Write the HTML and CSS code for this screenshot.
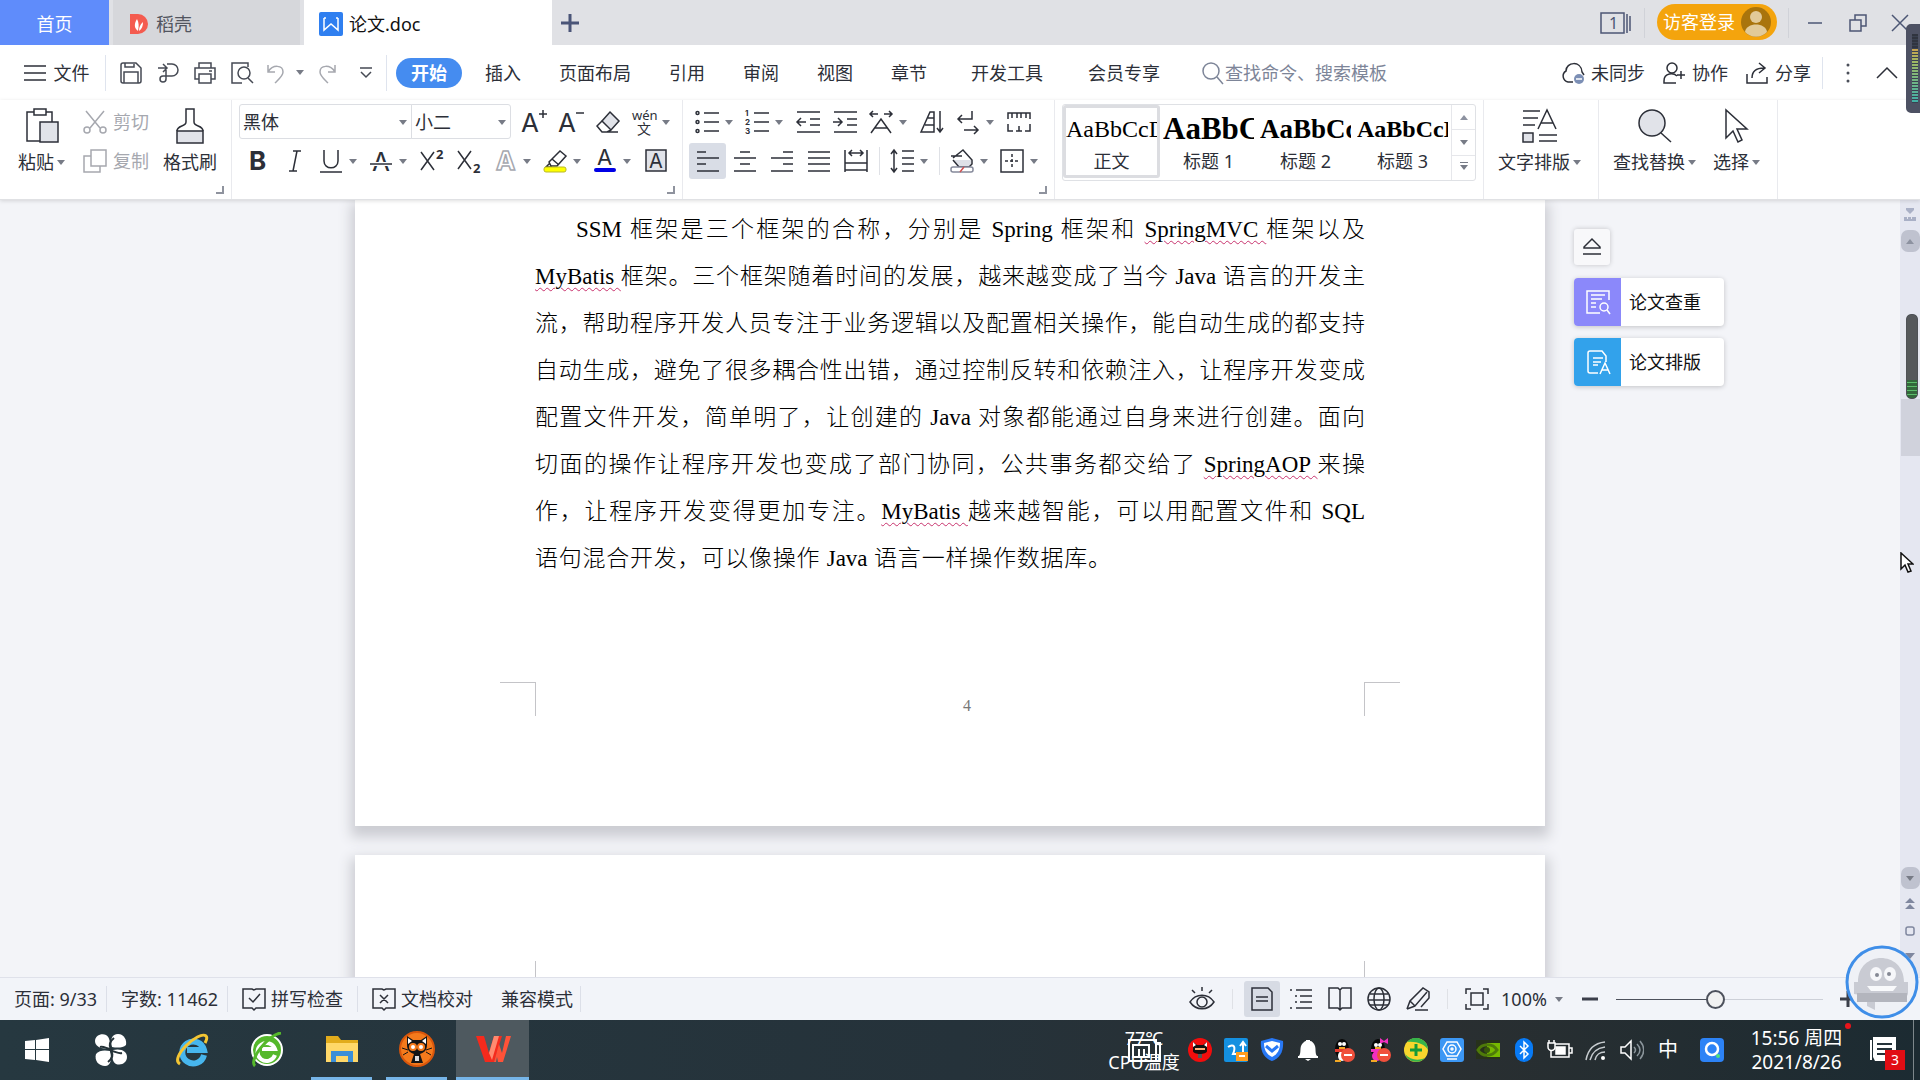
FILE: index.html
```html
<!DOCTYPE html>
<html lang="zh-CN">
<head>
  <meta charset="UTF-8" />
  <title>论文.doc</title>
  <link rel="stylesheet" href="styles.css">
</head>
<body>
  <header class="tabbar">
    <button class="tab home">首页</button>
    <button class="tab shell">
      <svg width="18" height="22" viewBox="0 0 18 22"><path d="M0 1h8a10 10 0 0 1 0 20H0z" fill="#f45b4f"/><path d="M8 18C4 15 4 11 7 6c2 4 2 7 1 12zm1 0c0-4 1-6 4-9 0 4-1 7-4 9z" fill="#fff"/></svg>
      稻壳
    </button>
    <button class="tab doc">
      <svg width="24" height="24" viewBox="0 0 24 24"><rect width="24" height="24" rx="2" fill="#2f7ff0"/><path d="M5 6v12l7-6 7 6V6M5 6h2M17 6h2" fill="none" stroke="#fff" stroke-width="1.500"/></svg>
      论文.doc
    </button>
    <button class="add" aria-label="新建"><svg width="18" height="18" viewBox="0 0 18 18"><path d="M9 0v18M0 9h18" stroke="#4a5578" stroke-width="3"/></svg></button>
    <div class="window">
      <button class="pages" aria-label="窗口"><svg class="ico" width="32" height="24" viewBox="0 0 32 24"><rect x="1" y="2" width="23" height="20"/><path d="M27 3v19M30 5v15"/><text x="9" y="18" class="t16">1</text></svg></button>
      <button class="login">访客登录
        <svg width="30" height="30" viewBox="0 0 30 30"><circle cx="15" cy="15" r="15" fill="#a9740c"/><circle cx="15" cy="10" r="6" fill="#e2ca98"/><path d="M4 25c1-10 21-10 22 0a15 15 0 0 1-22 0z" fill="#e2ca98"/></svg>
      </button>
      <button class="win" aria-label="最小化"><svg class="ico" width="16" height="18" viewBox="0 0 16 18"><path d="M1 9h14"/></svg></button>
      <button class="win" aria-label="还原"><svg class="ico" width="18" height="18" viewBox="0 0 18 18"><path d="M1 6h11v11H1zM6 6V1h11v11h-5"/></svg></button>
      <button class="win" aria-label="关闭"><svg class="ico" width="18" height="18" viewBox="0 0 18 18"><path d="M1 1l16 16M17 1L1 17"/></svg></button>
    </div>
  </header>

  <nav class="menubar">
    <button class="file"><svg class="ico" width="22" height="16" viewBox="0 0 22 16"><path d="M0 1h22M0 8h22M0 15h22"/></svg>文件</button>
    <div class="quick">
      <button aria-label="保存"><svg class="ico" width="24" height="24" viewBox="0 0 24 24"><path d="M4 2h13l5 5v13a2 2 0 0 1-2 2H4a2 2 0 0 1-2-2V4a2 2 0 0 1 2-2zM6 2v4h9V3M5 22V11h14v11"/></svg></button>
      <button aria-label="输出"><svg class="ico" width="24" height="24" viewBox="0 0 24 24"><path d="M2 7h8M7 3l4 4-4 4M11 3h5a6 6 0 0 1 0 12h-6v3a3 3 0 1 1-3-3h3V9"/></svg></button>
      <button aria-label="打印"><svg class="ico" width="24" height="24" viewBox="0 0 24 24"><path d="M6 7V2h12v5M6 18H2V7h20v11h-4M6 13h12v9H6zM16 10h3"/></svg></button>
      <button aria-label="打印预览"><svg class="ico" width="24" height="24" viewBox="0 0 24 24"><path d="M12 22H2V2h16v4M18 17l5 5"/><circle cx="14" cy="12" r="6"/></svg></button>
      <button class="off drop" aria-label="撤销"><svg class="ico" width="24" height="24" viewBox="0 0 24 24"><path d="M4 4v7h7M4 11c5-8 15-7 15 0 0 4-5 8-8 11"/></svg><i class="caret"></i></button>
      <button class="off" aria-label="恢复"><svg class="ico" width="24" height="24" viewBox="0 0 24 24"><path d="M20 4v7h-7M20 11C15 3 5 4 5 11c0 4 5 8 8 11"/></svg></button>
      <button aria-label="更多"><svg class="ico" width="14" height="14" viewBox="0 0 14 14"><path d="M1 2h12M2 6l5 5 5-5"/></svg></button>
    </div>
    <div class="menus">
      <button class="on">开始</button>
      <button>插入</button>
      <button class="wide">页面布局</button>
      <button>引用</button>
      <button>审阅</button>
      <button>视图</button>
      <button>章节</button>
      <button class="wide">开发工具</button>
      <button class="wide">会员专享</button>
    </div>
    <label class="search"><svg class="ico" width="24" height="24" viewBox="0 0 24 24"><circle cx="10" cy="10" r="8"/><path d="M16 16l6 7"/></svg><input type="text" placeholder="查找命令、搜索模板"></label>
    <div class="share">
      <button><svg class="ico" width="24" height="24" viewBox="0 0 24 24"><path d="M12 21H7a6 6 0 0 1-2-11c0-9 15-11 16 1l2 3"/><circle cx="18" cy="18" r="5" fill="#7c8fb5" stroke="none"/><path d="M15 18h6" stroke="#fff"/></svg>未同步</button>
      <button><svg class="ico" width="24" height="24" viewBox="0 0 24 24"><circle cx="10" cy="7" r="5"/><path d="M14 22H2v-2c0-9 10-8 13-5M15 14h8M19 10v8"/></svg>协作</button>
      <button><svg class="ico" width="24" height="24" viewBox="0 0 24 24"><path d="M2 13v9h20v-6M7 17c0-7 4-10 12-10M14 2l6 5-6 5"/></svg>分享</button>
      <button class="more" aria-label="更多"><svg width="4" height="22" viewBox="0 0 4 22" fill="#4a4e59"><circle cx="2" cy="3" r="1.500"/><circle cx="2" cy="11" r="1.500"/><circle cx="2" cy="19" r="1.500"/></svg></button>
      <button aria-label="收起"><svg class="ico" width="22" height="12" viewBox="0 0 22 12"><path d="M1 11L11 1l10 10"/></svg></button>
    </div>
  </nav>

  <section class="ribbon">
    <div class="group clip">
      <button class="big"><svg class="ico" width="36" height="36" viewBox="0 0 36 36"><path d="M10 4H3v29h13M22 4h6v10M10 1h12v6H10z"/><rect x="16" y="14" width="18" height="20" fill="#e1e3e9"/></svg><span>粘贴<i class="caret"></i></span></button>
      <div class="pair">
        <button class="off"><svg class="ico" width="24" height="24" viewBox="0 0 24 24"><path d="M3 1l14 17M21 1L7 18"/><circle cx="4" cy="20" r="3"/><circle cx="20" cy="20" r="3"/></svg>剪切</button>
        <button class="off"><svg class="ico" width="24" height="24" viewBox="0 0 24 24"><path d="M8 1h15v16H8zM8 7H1v16h16v-6"/></svg>复制</button>
      </div>
      <button class="big"><svg class="ico" width="36" height="36" viewBox="0 0 36 36"><path d="M5 23h26v12H5z" fill="#e1e3e9"/><path d="M5 23c0-6 9-4 9-9V1h8v13c0 5 9 3 9 9"/></svg><span>格式刷</span></button>
      <i class="corner"></i>
    </div>

    <div class="group font">
      <div class="row">
        <label class="combo name"><select aria-label="字体"><option>黑体</option></select><i class="caret"></i></label>
        <label class="combo size"><select aria-label="字号"><option>小二</option></select><i class="caret"></i></label>
        <button class="tool" aria-label="增大字号"><svg class="ico" width="26" height="26" viewBox="0 0 26 26"><text x="0" y="23" class="t26">A</text><path d="M18 5h8M22 1v8"/></svg></button>
        <button class="tool" aria-label="减小字号"><svg class="ico" width="26" height="26" viewBox="0 0 26 26"><text x="0" y="23" class="t26">A</text><path d="M18 4h8"/></svg></button>
        <button class="tool" aria-label="清除格式"><svg class="ico" width="24" height="24" viewBox="0 0 24 24"><path d="M14 2l9 9-8 9-9-9z" fill="#e1e3e9"/><path d="M6 11l-5 5 5 6h5l4-2M8 22h14"/></svg></button>
        <button class="tool drop" aria-label="拼音"><svg class="ico" width="24" height="26" viewBox="0 0 24 26"><text x="0" y="11" class="t13">wén</text><text x="5" y="25" class="t14">文</text></svg><i class="caret"></i></button>
      </div>
      <div class="row">
        <button class="tool" aria-label="加粗"><svg class="ico" width="24" height="24" viewBox="0 0 24 24"><text x="3" y="21" class="t26 bold">B</text></svg></button>
        <button class="tool" aria-label="倾斜"><svg class="ico" width="24" height="24" viewBox="0 0 24 24"><path d="M10 2h8M6 22h8M14 2l-4 20"/></svg></button>
        <button class="tool drop" aria-label="下划线"><svg class="ico" width="24" height="24" viewBox="0 0 24 24"><path d="M5 1v11c0 9 14 9 14 0V1M1 23h22"/></svg><i class="caret"></i></button>
        <button class="tool drop" aria-label="删除线"><svg class="ico" width="24" height="24" viewBox="0 0 24 24"><text x="3" y="22" class="t26">A</text><path d="M1 15h22" stroke="#fff" stroke-width="4"/><path d="M1 15h22"/></svg><i class="caret"></i></button>
        <button class="tool" aria-label="上标"><svg class="ico" width="26" height="24" viewBox="0 0 26 24"><path d="M2 3l13 18M15 3L2 21"/><text x="17" y="10" class="t13 bold">2</text></svg></button>
        <button class="tool" aria-label="下标"><svg class="ico" width="26" height="24" viewBox="0 0 26 24"><path d="M2 2l13 18M15 2L2 20"/><text x="17" y="24" class="t13 bold">2</text></svg></button>
        <button class="tool drop" aria-label="文字效果"><svg class="ico" width="24" height="24" viewBox="0 0 24 24"><text x="3" y="21" class="t26 hollow">A</text></svg><i class="caret"></i></button>
        <button class="tool drop" aria-label="突出显示"><svg class="ico" width="24" height="24" viewBox="0 0 24 24"><path d="M6 13L17 2l6 5-9 10H8zM9 10l7 6M7 14l-4 4h6"/><rect x="1" y="18" width="22" height="5" rx="2" fill="#ff0" stroke="#b9b928" stroke-width="1"/></svg><i class="caret"></i></button>
        <button class="tool drop" aria-label="字体颜色"><svg class="ico" width="24" height="24" viewBox="0 0 24 24"><text x="4" y="16" class="t22">A</text><rect x="1" y="19" width="22" height="4" rx="2" fill="#0000e6" stroke="none"/></svg><i class="caret"></i></button>
        <button class="tool" aria-label="字符底纹"><svg class="ico" width="24" height="24" viewBox="0 0 24 24"><rect x="2" y="1" width="20" height="21" fill="#e1e3e9"/><text x="5" y="19" class="t20">A</text></svg></button>
      </div>
      <i class="corner"></i>
    </div>

    <div class="group para">
      <div class="row">
        <button class="tool drop" aria-label="项目符号"><svg class="ico" width="24" height="24" viewBox="0 0 24 24"><path d="M9 3h15M9 12h15M9 21h15"/><circle cx="2.500" cy="3" r="1.500"/><circle cx="2.500" cy="12" r="1.500"/><circle cx="2.500" cy="21" r="1.500"/></svg><i class="caret"></i></button>
        <button class="tool drop" aria-label="编号"><svg class="ico" width="24" height="24" viewBox="0 0 24 24"><path d="M9 3h15M9 12h15M9 21h15"/><text x="0" y="6" class="t8">1</text><text x="0" y="15" class="t8">2</text><text x="0" y="24" class="t8">3</text></svg><i class="caret"></i></button>
        <button class="tool" aria-label="减少缩进"><svg class="ico" width="24" height="24" viewBox="0 0 24 24"><path d="M1 2h23M14 9h10M14 15h10M1 22h23M1 12h9M5 8l-4 4 4 4"/></svg></button>
        <button class="tool" aria-label="增加缩进"><svg class="ico" width="24" height="24" viewBox="0 0 24 24"><path d="M1 2h23M14 9h10M14 15h10M1 22h23M0 12h9M5 8l4 4-4 4"/></svg></button>
        <button class="tool drop" aria-label="中文版式"><svg class="ico" width="24" height="24" viewBox="0 0 24 24"><path d="M1 4h8M4 1L1 4l3 3M15 4h8M20 1l3 3-3 3M2 23L12 9l10 14M6 18h12"/></svg><i class="caret"></i></button>
        <button class="tool" aria-label="排序"><svg class="ico" width="24" height="24" viewBox="0 0 24 24"><path d="M1 22L10 2h4v20zM5 15h9M8 8h6"/><path d="M20 1v21M17 18l3 4 3-4"/></svg></button>
        <button class="tool drop" aria-label="显示段落标记"><svg class="ico" width="24" height="24" viewBox="0 0 24 24"><path d="M16 1v8H2M6 5L2 9l4 4M8 20h14M18 16l4 4-4 4"/></svg><i class="caret"></i></button>
        <button class="tool" aria-label="制表位"><svg class="ico" width="24" height="24" viewBox="0 0 24 24"><path d="M1 9V3h22v6M5 3v5M10 3v5M14 3v5M19 3v5M1 14v7h5M23 14v7h-5M9 21h6M12 16v5"/></svg></button>
      </div>
      <div class="row">
        <button class="tool on" aria-label="左对齐"><svg class="ico" width="24" height="24" viewBox="0 0 24 24"><path d="M1 3h9M1 9h22M1 15h9M1 22h22"/></svg></button>
        <button class="tool" aria-label="居中"><svg class="ico" width="24" height="24" viewBox="0 0 24 24"><path d="M7 3h10M1 9h22M7 15h10M1 22h22"/></svg></button>
        <button class="tool" aria-label="右对齐"><svg class="ico" width="24" height="24" viewBox="0 0 24 24"><path d="M13 3h10M1 9h22M13 15h10M1 22h22"/></svg></button>
        <button class="tool" aria-label="两端对齐"><svg class="ico" width="24" height="24" viewBox="0 0 24 24"><path d="M1 3h22M1 9h22M1 15h22M1 22h22"/></svg></button>
        <button class="tool" aria-label="分散对齐"><svg class="ico" width="24" height="24" viewBox="0 0 24 24"><path d="M1 1v22M23 1v22M5 4h14M8 1L5 4l3 3M16 1l3 3-3 3M1 14h22M1 21h22"/></svg></button>
        <i class="sep"></i>
        <button class="tool drop" aria-label="行距"><svg class="ico" width="24" height="24" viewBox="0 0 24 24"><path d="M12 2h12M12 9h12M12 15h12M12 22h12M4 1v22M1 5l3-4 3 4M1 19l3 4 3-4"/></svg><i class="caret"></i></button>
        <i class="sep"></i>
        <button class="tool drop" aria-label="底纹颜色"><svg class="ico" width="24" height="24" viewBox="0 0 24 24"><path d="M4 11h17v4l-3 3H8z" fill="#dfe1e7" stroke="none"/><path d="M3 9l10-8 9 10v4l-3 3H9L3 11M1 7h11"/><rect x="1" y="18" width="22" height="5" rx="2" fill="#fff" stroke="#85899a"/><path d="M10 23l4-5" stroke="#d05050"/></svg><i class="caret"></i></button>
        <button class="tool drop" aria-label="边框"><svg class="ico" width="24" height="24" viewBox="0 0 24 24"><rect x="1" y="1" width="22" height="22"/><path d="M12 5v14M5 12h14" stroke-dasharray="3 2"/></svg><i class="caret"></i></button>
      </div>
      <i class="corner"></i>
    </div>

    <div class="group styles">
      <div class="gallery">
        <button class="style picked"><span class="sample s0">AaBbCcDd</span>正文</button>
        <button class="style"><span class="sample s1">AaBbCc</span>标题 1</button>
        <button class="style"><span class="sample s2">AaBbCc</span>标题 2</button>
        <button class="style"><span class="sample s3">AaBbCcD</span>标题 3</button>
        <div class="scroller">
          <button aria-label="上"><i class="caret up"></i></button>
          <button aria-label="下"><i class="caret"></i></button>
          <button class="all" aria-label="全部"><i class="caret"></i></button>
        </div>
      </div>
    </div>

    <div class="group one">
      <button class="big"><svg class="ico" width="36" height="36" viewBox="0 0 36 36"><path d="M1 3h17M1 10h15M1 17h12M17 27h18M17 33h18M16 21L25 2l9 19M19 15h12"/><rect x="1" y="25" width="10" height="9" fill="#e1e3e9"/></svg><span>文字排版<i class="caret"></i></span></button>
    </div>
    <div class="group two">
      <button class="big"><svg class="ico" width="36" height="36" viewBox="0 0 36 36"><circle cx="15" cy="15" r="13" fill="#e1e3e9"/><path d="M24 25l10 9"/></svg><span>查找替换<i class="caret"></i></span></button>
      <button class="big"><svg class="ico" width="36" height="36" viewBox="0 0 36 36"><path d="M7 2v28l7-7 5 11 4-2-5-11h10z" fill="#fff"/></svg><span>选择<i class="caret"></i></span></button>
    </div>
  </section>

  <main class="workspace">
    <div class="sheets">
      <article class="sheet">
        <p class="text">
          <span class="line first">SSM 框架是三个框架的合称，分别是 Spring 框架和 <u>SpringMVC </u>框架以及</span>
          <span class="line"><u>MyBatis </u>框架。三个框架随着时间的发展，越来越变成了当今 Java 语言的开发主</span>
          <span class="line">流，帮助程序开发人员专注于业务逻辑以及配置相关操作，能自动生成的都支持</span>
          <span class="line">自动生成，避免了很多耦合性出错，通过控制反转和依赖注入，让程序开发变成</span>
          <span class="line">配置文件开发，简单明了，让创建的 Java 对象都能通过自身来进行创建。面向</span>
          <span class="line">切面的操作让程序开发也变成了部门协同，公共事务都交给了 <u>SpringAOP </u>来操</span>
          <span class="line">作，让程序开发变得更加专注。<u>MyBatis </u>越来越智能，可以用配置文件和 SQL</span>
          <span class="line last">语句混合开发，可以像操作 Java 语言一样操作数据库。</span>
        </p>
        <footer class="foot"><i class="mark left"></i><span>4</span><i class="mark right"></i></footer>
      </article>
      <article class="sheet next"><i class="mark left"></i><i class="mark right"></i></article>
    </div>
    <aside class="panel">
      <button class="eject" aria-label="收起"><svg class="ico" width="20" height="20" viewBox="0 0 20 20"><path d="M10 2L2 10v1h16v-1zM1 17h18"/></svg></button>
      <button class="card check"><b><svg class="ico" width="26" height="26" viewBox="0 0 26 26"><path d="M24 11V2H2v22h13M6 6h14M6 10h11M6 14h5M6 18h5"/><circle cx="19" cy="18" r="4"/><path d="M22 21l3 4"/></svg></b>论文查重</button>
      <button class="card layout"><b><svg class="ico" width="26" height="26" viewBox="0 0 26 26"><path d="M13 24H5a2 2 0 0 1-2-2V4a2 2 0 0 1 2-2h12l4 5v6M8 9h10M8 13h8M8 16h5M15 25l5-11 5 11M17 21h6"/></svg></b>论文排版</button>
    </aside>
    <div class="vbar">
      <svg width="14" height="14" viewBox="0 0 14 14" fill="#a9b0c6"><path d="M3 0h8v2L7 6 3 2zM1 13V9h3v2h1V9h3v2h1V9h4v4z"/></svg>
      <button aria-label="向上"><i class="caret up"></i></button>
      <div class="track"><i class="meter"></i><i class="thumb"></i></div>
      <button aria-label="向下"><i class="caret"></i></button>
      <svg class="jump" width="12" height="88" viewBox="0 0 12 88" fill="#7f879f"><path d="M1 14l5-5 5 5zM1 20l5-5 5 5zM1 64h10l-5 6z"/><rect x="2" y="38" width="8" height="8" rx="2" fill="none" stroke="#7f879f" stroke-width="1.500"/></svg>
    </div>
  </main>

  <footer class="status">
    <span class="cell">页面: 9/33</span>
    <span class="cell">字数: 11462</span>
    <button class="cell"><svg class="ico" width="24" height="24" viewBox="0 0 24 24"><path d="M12 3l-2-1H1v19h9l2 2 2-2h9V2h-9zM7 11l4 4 7-8"/></svg>拼写检查</button>
    <button class="cell open"><svg class="ico" width="24" height="24" viewBox="0 0 24 24"><path d="M12 3l-2-1H1v19h9l2 2 2-2h9V2h-9zM8 8l8 8M16 8l-8 8"/></svg>文档校对</button>
    <span class="cell mode">兼容模式</span>
    <div class="views">
      <button aria-label="护眼"><svg class="ico" width="26" height="26" viewBox="0 0 26 26"><path d="M1 16c6-9 18-9 24 0-6 9-18 9-24 0zM13 1v4M3 4l3 3M23 4l-3 3"/><circle cx="13" cy="16" r="5"/></svg></button>
      <i class="sep"></i>
      <button class="on" aria-label="页面视图"><svg class="ico" width="24" height="24" viewBox="0 0 24 24"><path d="M2 1h16l4 4v18H2zM6 10h12M6 14h12"/></svg></button>
      <button aria-label="大纲"><svg class="ico" width="24" height="24" viewBox="0 0 24 24"><path d="M1 3h2M7 3h16M6 9h2M11 9h12M6 15h2M11 15h12M1 21h2M7 21h16"/></svg></button>
      <button aria-label="阅读版式"><svg class="ico" width="24" height="24" viewBox="0 0 24 24"><path d="M12 3l-2-2H1v20h9l2 2 2-2h9V1h-9zM12 3v20"/></svg></button>
      <button aria-label="Web 版式"><svg class="ico" width="24" height="24" viewBox="0 0 24 24"><circle cx="12" cy="12" r="11"/><ellipse cx="12" cy="12" rx="5" ry="11"/><path d="M3 7h18M1 13h22M3 18h18"/></svg></button>
      <button aria-label="写作模式"><svg class="ico" width="24" height="24" viewBox="0 0 24 24"><path d="M1 22l3-8L17 1l6 4v6l-8 9M4 14l5 5L21 5M1 22l8-3M9 23h13"/></svg></button>
      <i class="sep last"></i>
      <button aria-label="全屏"><svg class="ico" width="24" height="24" viewBox="0 0 24 24"><path d="M1 7V2h5M18 2h5v5M23 17v5h-5M6 22H1v-5M6 6h12v12H6z"/></svg></button>
    </div>
    <button class="zoom">100%<i class="caret"></i></button>
    <button class="step" aria-label="缩小"><svg width="16" height="16" viewBox="0 0 16 16"><path d="M0 8h16" stroke="#3b3f4a" stroke-width="3"/></svg></button>
    <input type="range" class="slider" min="0" max="100" value="48" aria-label="缩放">
    <button class="step" aria-label="放大"><svg width="16" height="16" viewBox="0 0 16 16"><path d="M0 8h16M8 0v16" stroke="#3b3f4a" stroke-width="3"/></svg></button>
  </footer>

  <div class="taskbar">
    <div class="apps">
      <button aria-label="开始"><svg width="24" height="24" viewBox="0 0 24 24" fill="#fff"><path d="M0 3l10-1v9H0zM11 2l13-2v11H11zM0 12h10v10L0 21zM11 12h13v12l-13-2z"/></svg></button>
      <button aria-label="浏览器"><svg width="34" height="34" viewBox="0 0 34 34" fill="#fff"><path d="M16 15C7 17 1 13 1 8s6-8 11-6c4 2 4 8 4 13z"/><path d="M18 14C16 6 18 1 24 1s9 6 8 11c-3 3-9 3-14 2z"/><path d="M19 17c9-2 14 2 14 7s-5 9-11 7c-4-2-4-8-3-14z"/><path d="M16 18c2 8 1 15-5 15s-11-5-9-12c3-4 9-4 14-3z"/><path d="M20 5c-5 4-5 8-3 11-4 0-7-3-11-2M14 29c5-4 5-8 3-11 4 0 7 3 11 2" fill="none" stroke="#253238" stroke-width="2"/></svg></button>
      <button aria-label="Internet Explorer"><svg width="36" height="34" viewBox="0 0 36 34"><path d="M30 22A11 11 0 1 1 30 17H13" fill="none" stroke="#47b6ee" stroke-width="6"/><path d="M6 31C-5 25 25-3 32 3c2 2 0 5-1 7" fill="none" stroke="#f3c533" stroke-width="3"/></svg></button>
      <button aria-label="安全浏览器"><svg width="36" height="36" viewBox="0 0 36 36"><circle cx="18" cy="18" r="15" fill="#55b82b" stroke="#fff" stroke-width="2"/><path d="M26 23a9 9 0 1 1 0-6H13" fill="none" stroke="#fff" stroke-width="4"/><path d="M6 34C-1 28 20 2 32 1" fill="none" stroke="#55b82b" stroke-width="3"/></svg></button>
      <button class="run" aria-label="资源管理器"><svg width="34" height="28" viewBox="0 0 34 28"><path d="M1 1h12l3 4h17v22H1z" fill="#e2ac1c"/><path d="M1 8h32v19H1z" fill="#ffd869"/><path d="M6 27V16h22v11h-5v-6H11v6z" fill="#3b8fd8"/></svg></button>
      <button class="run" aria-label="忍者"><svg width="36" height="36" viewBox="0 0 36 36"><circle cx="18" cy="18" r="17" fill="#f47a1c" stroke="#d9560b" stroke-width="2"/><path d="M8 5l6 4h8l6-4v9c0 6-4 8-7 9l3 9H12l3-9c-3-1-7-3-7-9z" fill="#151515"/><path d="M9 7l4 3-4 3zM27 7l-4 3 4 3z" fill="#fff"/><circle cx="14" cy="16" r="3" fill="#fff" stroke="#f47a1c" stroke-width="2"/><circle cx="22" cy="16" r="3" fill="#fff" stroke="#f47a1c" stroke-width="2"/><path d="M3 17l6 2M4 24l5-3M33 17l-6 2M32 24l-5-3" stroke="#151515"/><path d="M16 25h4v5h-4z" fill="#ddd"/></svg></button>
      <button class="run active" aria-label="WPS"><svg width="36" height="30" viewBox="0 0 36 30"><path d="M1 2h8l5 17 5-17h8l-8 26h-9z" fill="#f52a1c"/><path d="M19 28l5-18 3 9 4-17h5l-8 26h-5l-1-5-1 5z" fill="#ff5238"/><path d="M14 19l5-17h5l-7 24z" fill="#ff8a70"/></svg></button>
    </div>
    <div class="tray">
      <div class="temp"><svg width="34" height="26" viewBox="0 0 34 26" fill="none" stroke="#fff" stroke-width="2"><path d="M2 2h27v21H2zM6 7h16v12H6zM12 11v8M17 11v8M29 5h4v18h-6"/></svg><span>77℃</span><span>CPU温度</span></div>
      <button aria-label="忍者"><svg width="24" height="24" viewBox="0 0 24 24"><circle cx="12" cy="12" r="12" fill="#f20d0d"/><path d="M5 4l4 3h6l4-3v9c0 4-14 4-14 0z" fill="#111"/><path d="M5 4l3 3-3 2zM19 4l-3 3 3 2z" fill="#fff"/><path d="M7 10h10v2H7z" fill="#ffb07a"/><path d="M10 16h4v4h-4z" fill="#555"/></svg></button>
      <button aria-label="网络"><svg width="24" height="24" viewBox="0 0 24 24"><rect width="24" height="24" rx="2" fill="#1490e0"/><path d="M4 9c6-4 8 0 5 7h5M19 14V5M16 8l3-4 3 4" fill="none" stroke="#fff" stroke-width="2"/><rect x="12" y="14" width="12" height="9" fill="#ff9d1e"/><path d="M15 18h6" stroke="#fff" stroke-width="2"/></svg></button>
      <button aria-label="安全"><svg width="24" height="24" viewBox="0 0 24 24"><path d="M12 0l11 3c1 10-3 17-11 20C4 20 0 13 1 3z" fill="#2878f5"/><path d="M12 3l8 2c0 6-2 11-8 14C6 16 4 11 4 5z" fill="#fff"/><path d="M6 8l6 5 6-5" fill="none" stroke="#2878f5" stroke-width="3"/></svg></button>
      <button aria-label="通知"><svg width="24" height="24" viewBox="0 0 24 24" fill="#fff"><path d="M2 18h1c2-2 1-7 2-10 1-3 4-5 5-5V2h4v1c2 0 4 2 5 5s0 8 2 10h1v2H2zM9 21h6l-3 2z"/></svg></button>
      <button aria-label="QQ"><svg width="24" height="24" viewBox="0 0 24 24"><ellipse cx="10" cy="11" rx="7" ry="10" fill="#080808"/><ellipse cx="10" cy="18" rx="4" ry="5" fill="#fff"/><path d="M3 11h14v3H3z" fill="#e53b2e"/><circle cx="8" cy="6" r="2" fill="#fff"/><circle cx="12" cy="6" r="2" fill="#fff"/><path d="M7 9h6v2H7zM3 22h6v2H3z" fill="#f3a824"/><circle cx="16" cy="17" r="7" fill="#f0503c"/><path d="M12 17h8" stroke="#fff" stroke-width="2"/></svg></button>
      <button aria-label="QQ"><svg width="24" height="24" viewBox="0 0 24 24"><ellipse cx="10" cy="11" rx="7" ry="10" fill="#080808"/><ellipse cx="9" cy="18" rx="5" ry="5" fill="#f22fc0"/><path d="M3 11h14v3H3zM12 0l4 3 4-3v6l-4-2-4 2z" fill="#f22fc0"/><circle cx="8" cy="7" r="2" fill="#fff"/><circle cx="12" cy="7" r="2" fill="#fff"/><path d="M7 9h6v2H7zM3 22h6v2H3z" fill="#f3a824"/><circle cx="16" cy="17" r="7" fill="#f0503c"/><path d="M12 17h8" stroke="#fff" stroke-width="2"/></svg></button>
      <button aria-label="卫士"><svg width="24" height="24" viewBox="0 0 24 24"><circle cx="12" cy="12" r="12" fill="#f8d62d"/><path d="M3 4a12 12 0 0 1 21 8c-3-6-12-9-21-8zM1 16c5 6 13 7 20 4a12 12 0 0 1-20-4z" fill="#36b44a"/><path d="M12 6v12M6 12h12" stroke="#149a39" stroke-width="3"/></svg></button>
      <button aria-label="电脑管家"><svg width="24" height="24" viewBox="0 0 24 24" fill="none" stroke="#fff" stroke-width="1.500"><rect width="24" height="24" rx="3" fill="#3c97f4" stroke="none"/><path d="M7 4h10l4 7-4 7H7l-4-7z"/><circle cx="12" cy="11" r="4"/><circle cx="12" cy="11" r="1"/><path d="M7 21h10"/></svg></button>
      <button aria-label="NVIDIA"><svg width="24" height="24" viewBox="0 0 24 24"><rect y="2" width="24" height="19" fill="#27311b"/><path d="M11 5h13v14H11z" fill="#76b900"/><path d="M2 12c4-7 15-7 19 0-5 7-15 7-19 0z" fill="none" stroke="#4e7a09" stroke-width="3"/><circle cx="11" cy="12" r="3" fill="#37560a"/></svg></button>
      <button aria-label="蓝牙"><svg width="18" height="24" viewBox="0 0 18 24"><rect width="18" height="24" rx="9" fill="#087af5"/><path d="M5 8l8 8-4 4V4l4 4-8 8" fill="none" stroke="#fff" stroke-width="1.500"/></svg></button>
      <button aria-label="电源"><svg width="26" height="22" viewBox="0 0 26 22" fill="none" stroke="#fff" stroke-width="1.500"><path d="M8 5h14v13H4v-6M22 9h3v5h-3M2 1v3M7 1v3"/><path d="M1 4h7v4a3 3 0 0 1-7 0z"/><path d="M9 8h9v7H9z" fill="#fff"/></svg></button>
      <button aria-label="网络"><svg width="24" height="24" viewBox="0 0 24 24" fill="none" stroke="#c7ccd0" stroke-width="1.500"><path d="M2 22C4 11 11 5 21 4M6 22c2-8 7-12 15-13M11 22c1-5 5-8 10-8"/><circle cx="19" cy="20" r="2" fill="#fff" stroke="none"/></svg></button>
      <button aria-label="音量"><svg width="24" height="24" viewBox="0 0 24 24" fill="none" stroke="#fff" stroke-width="1.500"><path d="M1 9h4l6-6v18l-6-6H1z"/><path d="M14 9c2 2 2 4 0 6M17 6c4 4 4 8 0 12M20 3c5 6 5 12 0 18" stroke="#8b959b"/></svg></button>
      <button class="ime">中</button>
      <button class="q" aria-label="Q"><svg width="24" height="24" viewBox="0 0 24 24"><rect width="24" height="24" rx="4" fill="#2d83f6"/><circle cx="12" cy="11" r="6" fill="none" stroke="#fff" stroke-width="2.500"/><circle cx="18" cy="18" r="2" fill="#4ee07c"/></svg></button>
      <time class="clock"><span>15:56 周四</span><span>2021/8/26</span></time>
      <button class="notice" aria-label="3 条通知"><svg width="26" height="26" viewBox="0 0 26 26"><path d="M3 0h23v24H5l-2-4z" fill="#fff"/><path d="M1 3v20" stroke="#fff" stroke-width="2"/><path d="M7 7h15M7 12h15M7 17h9" stroke="#26333a" stroke-width="2"/></svg><b>3</b></button>
    </div>
  </div>

  <i class="gauge"></i>
  <i class="dot"></i>
  <svg class="pointer" width="14" height="22" viewBox="0 0 14 22"><path d="M1 1v16l4-4 3 7 3-1-3-7h5z" fill="#fff" stroke="#111" stroke-width="1.500"/></svg>
  <svg class="helper" width="74" height="76" viewBox="0 0 74 76"><circle cx="37" cy="38" r="35" fill="#eff1f6" stroke="#3f8ee8" stroke-width="3"/><path d="M9 50V38h4c0-32 46-32 46 0h4v12l-4 8H30v8l-8-4V52z" fill="#c9cbd3"/><path d="M12 49h50v9H12z" fill="#b3b5bd"/><ellipse cx="31" cy="30" rx="6" ry="7" fill="#f6f7fa"/><ellipse cx="45" cy="30" rx="6" ry="7" fill="#f6f7fa"/><circle cx="32" cy="31" r="2" fill="#858994"/><circle cx="44" cy="30" r="2" fill="#858994"/><path d="M22 42h30l-4 5H26z" fill="#f8f9fb"/></svg>
</body>
</html>
```
FILE: styles.css
```css
* {
  box-sizing: border-box;
}
body {
  margin: 0;
  height: 100vh;
  display: flex;
  flex-direction: column;
  position: relative;
  overflow: hidden;
  background: #fff;
  color: #2c2f38;
  font-family: "Noto Sans", "Noto Sans CJK SC", sans-serif;
  font-size: 18px;
  line-height: 24px;
}
button,
input,
select {
  font: inherit;
  color: inherit;
  background: none;
  border: none;
  padding: 0;
  margin: 0;
}
button {
  display: flex;
  align-items: center;
  justify-content: center;
  white-space: nowrap;
  flex-shrink: 0;
}
svg {
  flex-shrink: 0;
}
.ico {
  fill: none;
  stroke: currentColor;
  stroke-width: 1.5;
  overflow: visible;
}
.ico text {
  fill: currentColor;
  stroke: none;
}
.t8 { font: bold 8px/8px Inter, sans-serif; }
.t13 { font-size: 13px; }
.t14 { font-size: 14px; }
.t16 { font-size: 16px; }
.t20 { font: 20px Inter, sans-serif; }
.t22 { font: 22px Inter, sans-serif; }
.t26 { font: 26px Inter, sans-serif; }
.bold { font-weight: bold; }
.ico text.hollow {
  fill: #fff;
  stroke: #a6a8af;
  font-weight: bold;
}
.caret {
  border: 4px solid transparent;
  border-top: 5px solid #777b86;
  border-bottom: none;
  flex-shrink: 0;
}
.caret.up {
  border-top: none;
  border-bottom: 5px solid #8d92a0;
}
.off {
  color: #a6a8af;
}

/* title bar */
.tabbar {
  display: flex;
  height: 45px;
  flex-shrink: 0;
  background: #e0e1e5;
}
.tab {
  justify-content: flex-start;
  padding-top: 3px;
}
.tab.home {
  width: 109px;
  margin-right: 4px;
  justify-content: center;
  color: #fff;
  background: #5f8cfb;
}
.tab.shell {
  width: 187px;
  margin-right: 4px;
  padding-left: 17px;
  gap: 8px;
  color: #52555f;
  background: #d6d7db;
}
.tab.doc {
  width: 248px;
  padding-left: 15px;
  gap: 6px;
  color: #111;
  background: #fff;
}
.add {
  width: 36px;
}
.window {
  display: flex;
  align-items: center;
  margin-left: auto;
  padding-right: 2px;
  color: #4c5674;
}
.pages {
  padding-right: 12px;
  height: 30px;
  border-right: 1px solid #d0d2d8;
}
.login {
  width: 120px;
  height: 36px;
  margin: 0 11px 2px 12px;
  gap: 6px;
  border-radius: 18px;
  color: #fff;
  background: #f4a40d;
}
.win {
  width: 44px;
  height: 30px;
}
.win:nth-last-child(3) {
  width: 48px;
  border-left: 1px solid #d0d2d8;
  padding-left: 4px;
}
.win:last-child {
  width: 36px;
  margin-left: 2px;
}

/* menu row */
.menubar {
  display: flex;
  align-items: center;
  height: 55px;
  flex-shrink: 0;
}
.file {
  width: 106px;
  height: 36px;
  padding-left: 8px;
  gap: 8px;
  border-right: 1px solid #dfe4ee;
}
.quick {
  display: flex;
  align-items: center;
  width: 281px;
  height: 36px;
  padding-left: 6px;
  border-right: 1px solid #dfe4ee;
  color: #464a54;
}
.quick button {
  width: 37px;
  height: 32px;
}
.quick .off {
  color: #a6a8af;
}
.quick .drop {
  width: 48px;
  gap: 8px;
}
.quick button:last-child {
  margin-left: 2px;
}
.menus {
  display: flex;
  padding-left: 9px;
}
.menus button {
  width: 74px;
  height: 30px;
}
.menus .wide {
  width: 110px;
}
.menus .wide:nth-child(8) {
  width: 122px;
}
.menus .wide:nth-child(9) {
  width: 112px;
}
.menus .on {
  width: 66px;
  margin-right: 4px;
  border-radius: 15px;
  color: #fff;
  font-weight: bold;
  background: #458cf0;
}
.search {
  display: flex;
  align-items: center;
  margin-left: 21px;
  color: #7d8598;
}
.search input {
  width: 180px;
  outline: none;
}
.search input::placeholder {
  color: #7d8598;
}
.share {
  display: flex;
  align-items: center;
  margin-left: auto;
  padding-right: 22px;
}
.share button {
  gap: 6px;
  margin-right: 17px;
}
.share button:nth-child(3) {
  height: 32px;
  margin-right: 0;
  padding-right: 11px;
  border-right: 1px solid #dfe4ee;
}
.share .more {
  margin: 0 26px 0 23px;
}
.share button:last-child {
  margin-right: 0;
}

/* ribbon */
.ribbon {
  display: flex;
  height: 100px;
  flex-shrink: 0;
  position: relative;
  z-index: 1;
  border-bottom: 1px solid #e0e1e4;
  box-shadow: 0 1px 4px #0002;
}
.group {
  position: relative;
  padding-top: 4px;
  border-right: 1px solid #e9eaee;
}
.clip {
  display: flex;
  width: 232px;
  padding-left: 18px;
}
.font {
  width: 451px;
  padding-left: 7px;
}
.para {
  width: 372px;
  padding-left: 6px;
}
.styles {
  width: 429px;
  padding-left: 7px;
}
.one {
  width: 115px;
  padding-left: 14px;
}
.two {
  display: flex;
  gap: 17px;
  width: 179px;
  padding-left: 14px;
}
.corner {
  position: absolute;
  right: 7px;
  bottom: 5px;
  width: 8px;
  height: 8px;
  border-right: 2px solid #8f939e;
  border-bottom: 2px solid #8f939e;
}
.big {
  flex-direction: column;
  justify-content: flex-start;
  height: 76px;
  padding-top: 4px;
  gap: 6px;
}
.big span {
  display: flex;
  align-items: center;
  gap: 3px;
}
.pair {
  display: flex;
  flex-direction: column;
  gap: 3px;
  margin: 0 14px 0 18px;
}
.pair button {
  height: 36px;
  gap: 6px;
}
.row {
  display: flex;
  height: 36px;
  margin-bottom: 3px;
}
.tool {
  width: 37px;
  height: 36px;
}
.tool.drop {
  width: 50px;
  padding: 0 6px 0 6px;
  justify-content: space-between;
}
.tool.on {
  background: #d9dde6;
  border-radius: 3px;
}
.sep {
  width: 1px;
  height: 28px;
  margin: 4px 4px 0 5px;
  background: #dfe1e6;
}
.combo {
  position: relative;
  height: 35px;
  border: 1px solid #dcdee3;
}
.combo.name {
  width: 173px;
  border-radius: 3px 0 0 3px;
}
.combo.size {
  width: 100px;
  margin: 0 4px 0 -1px;
  border-radius: 0 3px 3px 0;
}
.combo select {
  width: 100%;
  height: 33px;
  padding-left: 3px;
  appearance: none;
}
.combo .caret {
  position: absolute;
  right: 4px;
  top: 15px;
}
.gallery {
  display: flex;
  width: 414px;
  height: 77px;
  border: 1px solid #dfe1e5;
  border-radius: 3px;
}
.style {
  flex-direction: column;
  width: 97px;
  height: 73px;
  overflow: hidden;
  gap: 4px;
  border: 3px solid transparent;
}
.style.picked {
  border-color: #dcdde1;
  border-radius: 3px;
}
.sample {
  width: 91px;
  height: 34px;
  overflow: hidden;
  text-align: left;
  color: #000;
  font-family: "Liberation Serif", serif;
  line-height: 36px;
}
.s0 { font-size: 24px; }
.s1 { font-size: 31px; font-weight: bold; }
.s2 { font-size: 27px; font-weight: bold; }
.s3 { font-size: 24px; font-weight: bold; }
.scroller {
  flex: 1;
  display: flex;
  flex-direction: column;
  border-left: 1px solid #e6e7eb;
}
.scroller button {
  flex: 1;
}
.scroller button + button {
  border-top: 1px solid #e6e7eb;
}
.scroller .all::before {
  content: "";
  position: absolute;
  width: 8px;
  height: 1px;
  margin-bottom: 10px;
  background: #777b86;
}

/* document */
.workspace {
  display: grid;
  grid-template-columns: 1fr 1190px 1fr 20px;
  grid-template-rows: 100%;
  flex: 1;
  min-height: 0;
  overflow: hidden;
  background: #f3f4f8;
}
.sheets {
  grid-column: 2;
  display: flex;
  flex-direction: column;
}
.sheet {
  background: #fff;
  flex-shrink: 0;
  padding-top: 6px;
  box-shadow: 0 7px 12px 4px #cbccd2;
}
.sheet.next {
  display: flex;
  justify-content: space-between;
  height: 140px;
  margin-top: 29px;
  padding: 106px 145px 0;
}
.text {
  margin: 0 180px;
  color: #000;
  font-family: "Liberation Serif", "Noto Sans CJK SC", serif;
  font-size: 23px;
  font-weight: 300;
  line-height: 47px;
}
.line {
  display: block;
  white-space: nowrap;
  text-align-last: justify;
}
.line.first {
  padding-left: 41px;
}
.line.last {
  width: 576px;
}
.text u {
  white-space: pre;
  text-decoration: underline wavy #c8336e 1px;
  text-underline-offset: 3px;
}
.foot {
  display: flex;
  height: 144px;
  margin-top: 100px;
  padding: 0 145px;
  color: #777;
  font-family: "Liberation Serif", serif;
  font-size: 16px;
}
.foot span {
  flex: 1;
  padding: 12px 0 0 34px;
  text-align: center;
}
.mark {
  width: 36px;
  height: 34px;
  border: 0 solid #c4c4c8;
}
.mark.left {
  border-right-width: 1px;
}
.mark.right {
  border-left-width: 1px;
}
.foot .mark {
  border-top-width: 1px;
}
.panel {
  padding: 29px 0 0 29px;
}
.eject {
  width: 36px;
  height: 36px;
  margin-bottom: 13px;
  border-radius: 3px;
  background: #f8f8fa;
  box-shadow: 0 0 5px #0003;
}
.card {
  width: 150px;
  height: 48px;
  margin-bottom: 12px;
  justify-content: flex-start;
  gap: 8px;
  overflow: hidden;
  border-radius: 4px;
  color: #111;
  background: #fff;
  box-shadow: 0 1px 5px #0003;
}
.card b {
  display: flex;
  align-items: center;
  justify-content: center;
  width: 47px;
  height: 48px;
  color: #fff;
}
.check b {
  background: #8b88fa;
}
.layout b {
  background: #32a2eb;
}
.vbar {
  display: flex;
  flex-direction: column;
  align-items: center;
  padding-top: 8px;
  background: #e5e7f1;
}
.vbar button {
  width: 19px;
  height: 22px;
  border-radius: 7px;
  background: #bfc2cf;
}
.vbar > svg:first-child {
  margin-bottom: 8px;
}
.track {
  flex: 1;
  width: 19px;
  padding-top: 62px;
}
.meter {
  display: block;
  width: 12px;
  height: 85px;
  margin-left: 5px;
  border-radius: 5px;
  border: 1px solid #4e5157;
  background: linear-gradient(#55585c 65px, transparent 65px), repeating-linear-gradient(#33683c 0 3px, #5bbd6b 3px 4px);
}
.thumb {
  display: block;
  height: 57px;
  background: #d0d2dc;
}

/* status bar */
.status {
  display: flex;
  align-items: center;
  height: 43px;
  flex-shrink: 0;
  border-top: 1px solid #dfe1ea;
  background: #f2f4f9;
}
.cell {
  display: flex;
  align-items: center;
  height: 26px;
  gap: 5px;
  padding: 0 9px 0 14px;
  white-space: nowrap;
  border-right: 1px solid #dcdfe8;
}
.cell:nth-child(3) {
  padding-right: 14px;
}
.cell.open {
  padding-right: 14px;
  border-right: none;
}
.cell.mode {
  padding-right: 7px;
}
.views {
  display: flex;
  align-items: center;
  margin-left: auto;
}
.views button {
  width: 36px;
  height: 36px;
  margin-right: 3px;
}
.views button:first-child {
  margin: 0 8px 0 0;
}
.views button:last-child {
  margin: 0;
}
.views .on {
  background: #d7dbe4;
  border-radius: 3px;
}
.views .sep {
  height: 20px;
  margin: 0 11px 0 4px;
}
.views .last {
  margin: 0 11px 0 8px;
}
.zoom {
  width: 68px;
  gap: 8px;
  margin: 0 16px 0 3px;
}
.slider {
  width: 207px;
  height: 20px;
  margin: 0 17px 0 18px;
  appearance: none;
  background: linear-gradient(90deg, #4d515c 48%, #cdd0d8 48%) center / 100% 1px no-repeat;
}
.slider::-webkit-slider-thumb {
  appearance: none;
  width: 19px;
  height: 19px;
  border: 2px solid #4d515c;
  border-radius: 50%;
  background: #f1f1f1;
}
.step:last-child {
  margin-right: 64px;
}

/* taskbar */
.taskbar {
  display: flex;
  justify-content: space-between;
  height: 60px;
  flex-shrink: 0;
  color: #fff;
  background: linear-gradient(90deg, #263840, #25323a 50%, #2a2f31 75%, #1c2b32);
}
.apps {
  display: flex;
}
.apps button {
  width: 61px;
  height: 60px;
  margin-right: 14px;
}
.apps button:first-child {
  width: 73px;
  margin-right: 7px;
}
.apps button:nth-child(2) {
  margin-right: 20px;
}
.apps .run {
  border-bottom: 3px solid #76b5e8;
}
.apps button:nth-child(6) {
  margin-right: 9px;
}
.apps .active {
  width: 73px;
  background: #4e595f;
}
.tray {
  display: flex;
  align-items: center;
  padding-right: 6px;
}
.tray button {
  width: 36px;
  height: 60px;
}
.temp {
  display: flex;
  flex-direction: column;
  align-items: center;
  position: relative;
  width: 76px;
}
.temp svg {
  position: absolute;
  top: 12px;
}
.tray .ime {
  font-size: 20px;
}
.tray .q {
  width: 52px;
}
.clock {
  display: flex;
  flex-direction: column;
  align-items: center;
  width: 117px;
  font-size: 19px;
}
.tray .notice {
  position: relative;
  width: 59px;
  padding-right: 2px;
  border-right: 1px solid #7d878b;
}
.notice b {
  position: absolute;
  right: 8px;
  top: 30px;
  width: 20px;
  font-size: 14px;
  font-weight: normal;
  line-height: 20px;
  background: #e10d14;
}

/* floating widgets */
.gauge {
  position: absolute;
  right: 0;
  top: 24px;
  z-index: 2;
  width: 14px;
  height: 89px;
  border: 4px solid #4d5163;
  border-width: 10px 2px 10px 6px;
  border-radius: 5px 0 0 5px;
  background: repeating-linear-gradient(transparent 0 2px, #3a4150 2px 3px), linear-gradient(#30343f 14px, #c9a24e 15px, #9fb864 40%, #3fb0a8);
}
.dot {
  position: absolute;
  right: 69px;
  bottom: 51px;
  width: 6px;
  height: 6px;
  border-radius: 50%;
  background: #e8141b;
}
.pointer {
  position: absolute;
  right: 6px;
  top: 552px;
}
.helper {
  position: absolute;
  right: 1px;
  bottom: 60px;
}
```
